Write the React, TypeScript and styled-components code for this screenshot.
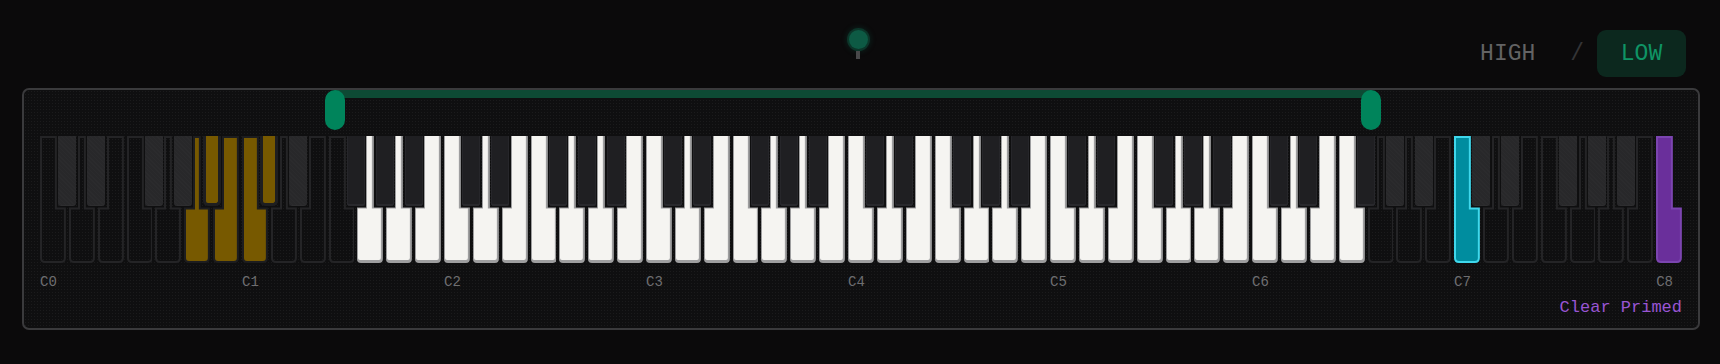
import React from 'react';
import styled, { createGlobalStyle, css } from 'styled-components';

const MONO = `"Liberation Mono", "DejaVu Sans Mono", monospace`;

const KB_WIDTH = 1642;
const GAP = 3;
const WHITE_COUNT = 57;
const KW = (KB_WIDTH - GAP * (WHITE_COUNT - 1)) / WHITE_COUNT;
const PITCH = KW + GAP;
const KH = 127;
const BW = 18;
const BH = 70;
const NOTCH = BW / 2 - GAP / 2 + 1.5; // cut into white key
const DEPTH = BH + 1.5;

type KeyState = 'off' | 'active' | 'hold' | 'cyan' | 'purple';

const stateOf = (s: number): KeyState => {
  if (s >= 9 && s <= 13) return 'hold';
  if (s === 84) return 'cyan';
  if (s === 96) return 'purple';
  if (s >= 18 && s <= 78) return 'active';
  return 'off';
};

const WHITE_OFFS = [0, 2, 4, 5, 7, 9, 11];
const NAMES = ['C', 'D', 'E', 'F', 'G', 'A', 'B'];
const BLACKS: { off: number; leftWhite: number }[] = [
  { off: 1, leftWhite: 0 },
  { off: 3, leftWhite: 1 },
  { off: 6, leftWhite: 3 },
  { off: 8, leftWhite: 4 },
  { off: 10, leftWhite: 5 },
];

type WhiteDef = { s: number; idx: number; nl: boolean; nr: boolean; state: KeyState };
type BlackDef = { s: number; left: number; state: KeyState };

const whites: WhiteDef[] = [];
const blacks: BlackDef[] = [];
for (let o = 0; o <= 8; o++) {
  for (let n = 0; n < 7; n++) {
    const idx = o * 7 + n;
    if (idx >= WHITE_COUNT) break;
    const name = NAMES[n];
    const s = o * 12 + WHITE_OFFS[n];
    whites.push({
      s,
      idx,
      nl: ['D', 'E', 'G', 'A', 'B'].includes(name),
      nr: ['C', 'D', 'F', 'G', 'A'].includes(name),
      state: stateOf(s),
    });
  }
  if (o < 8) {
    for (const b of BLACKS) {
      const lw = o * 7 + b.leftWhite;
      const s = o * 12 + b.off;
      blacks.push({ s, left: (lw + 1) * PITCH - GAP / 2 - BW / 2, state: stateOf(s) });
    }
  }
}

function keyPath(
  x0: number, y0: number, x1: number, y1: number,
  cutL: number | null, cutR: number | null, dy: number, r: number,
) {
  const L = cutL ?? x0;
  const R = cutR ?? x1;
  let p = `M${L},${y0} H${R}`;
  if (cutR !== null) p += ` V${dy} H${x1}`;
  p += ` V${y1 - r} Q${x1},${y1} ${x1 - r},${y1} H${x0 + r} Q${x0},${y1} ${x0},${y1 - r}`;
  if (cutL !== null) p += ` V${dy} H${L}`;
  p += ' Z';
  return p;
}

function strokedPath(w: WhiteDef, s: number, r: number) {
  const h = s / 2;
  return keyPath(
    h, h, KW - h, KH - h,
    w.nl ? NOTCH + h : null,
    w.nr ? KW - NOTCH - h : null,
    DEPTH + h, r,
  );
}

const STROKES: Record<Exclude<KeyState, 'active'>, { fill: string; stroke: string }> = {
  off: { fill: 'none', stroke: '#242426' },
  hold: { fill: '#775900', stroke: '#1d1d1f' },
  cyan: { fill: '#008d9f', stroke: '#3fd8ec' },
  purple: { fill: '#6a2f9b', stroke: '#7b45b0' },
};

const GlobalStyle = createGlobalStyle`
  html, body { margin: 0; padding: 0; background: #0b0a0b; }
  body { font-family: ${MONO}; width: 1720px; height: 364px; overflow: hidden; }
`;

const Page = styled.div`
  width: 1720px;
  height: 364px;
  display: flex;
  flex-direction: column;
  background: #0b0a0b;
`;

const Header = styled.header`
  height: 88px;
  box-sizing: border-box;
  padding-top: 30px;
  display: grid;
  grid-template-columns: 1fr auto 1fr;
  align-items: start;
`;

const Knob = styled.div`
  grid-column: 2;
  display: flex;
  flex-direction: column;
  align-items: center;
  gap: 2px;
  margin-left: -4px;
`;

const KnobDot = styled.div`
  width: 19px;
  height: 19px;
  border-radius: 50%;
  background: #0d5a44;
  box-shadow: 0 0 0 2px rgba(13, 60, 46, 0.8), 0 0 5px 3px rgba(12, 70, 54, 0.35);
`;

const KnobStem = styled.div`
  width: 4px;
  height: 8px;
  background: #48484a;
`;

const Toggle = styled.div`
  grid-column: 3;
  justify-self: end;
  margin-right: 34px;
  display: flex;
  align-items: center;
`;

const ToggleButton = styled.button<{ $active?: boolean }>`
  width: 89px;
  height: 47px;
  border: none;
  border-radius: 9px;
  font-family: ${MONO};
  font-size: 23px;
  padding: 0;
  cursor: pointer;
  background: transparent;
  color: #636364;
  ${(p) =>
    p.$active &&
    css`
      background: #0c281e;
      color: #0f9465;
    `}
`;

const Slash = styled.span`
  font-size: 23px;
  color: #343436;
  margin: 0 13px 0 18px;
`;

const Panel = styled.section`
  margin: 0 20px 0 22px;
  height: 242px;
  box-sizing: border-box;
  border: 2px solid #3a3a3c;
  border-radius: 7px;
  padding: 0 16px;
  background-color: #0f0f10;
  background-image: radial-gradient(rgba(255, 255, 255, 0.05) 0.8px, transparent 1px);
  background-size: 3px 3px;
  display: flex;
  flex-direction: column;
`;

const RangeTrack = styled.div`
  position: relative;
  height: 46px;
  flex: none;
`;

const RangeFill = styled.div`
  position: absolute;
  top: 0;
  height: 8px;
  background: #0d4a34;
`;

const Handle = styled.div`
  position: absolute;
  top: 0;
  width: 20px;
  height: 40px;
  border-radius: 10px;
  background: #00845b;
  transform: translateX(-50%);
`;

const Keyboard = styled.div`
  position: relative;
  height: ${KH}px;
  display: flex;
  gap: ${GAP}px;
  flex: none;
`;

const WhiteKey = styled.div`
  width: ${KW}px;
  height: ${KH}px;
  flex: none;
  svg { display: block; }
`;

const blackStyles: Record<KeyState, ReturnType<typeof css>> = {
  active: css`
    background: #1f1f22;
    box-shadow: inset 0 -2px 0 #29292d, inset 1px 0 0 #26262a, inset -1px 0 0 #26262a;
  `,
  off: css`
    background-color: #28282a;
    background-image: repeating-linear-gradient(45deg, rgba(255, 255, 255, 0.015) 0 1px, transparent 1px 3px);
    box-shadow: inset 0 -1px 0 #2e2e30;
  `,
  hold: css`
    background: #775900;
    border: 3px solid #1e1e20;
    border-top: none;
    border-radius: 0 0 5px 5px;
  `,
  cyan: css`background: #008d9f;`,
  purple: css`background: #6a2f9b;`,
};

const BlackKey = styled.div<{ $state: KeyState }>`
  position: absolute;
  top: 0;
  width: ${BW}px;
  height: ${BH}px;
  box-sizing: border-box;
  border-radius: 0 0 3px 3px;
  ${(p) => blackStyles[p.$state]}
`;

const Labels = styled.div`
  display: grid;
  grid-template-columns: repeat(8, ${7 * PITCH}px) 1fr;
  margin-top: 11px;
  line-height: 17px;
  font-size: 14px;
  color: #6e6e70;
  flex: none;
`;

const OctaveLabel = styled.span``;

const ClearRow = styled.div`
  margin-top: 7px;
  display: flex;
  justify-content: flex-end;
`;

const ClearButton = styled.button`
  background: none;
  border: none;
  padding: 0;
  font-family: ${MONO};
  font-size: 17px;
  line-height: 20px;
  color: #9955d3;
  cursor: pointer;
`;

const WhiteKeyShape: React.FC<{ def: WhiteDef }> = ({ def }) => {
  if (def.state === 'active') {
    const shadow = keyPath(0, 0, KW, KH, def.nl ? NOTCH : null, def.nr ? KW - NOTCH : null, DEPTH, 4);
    const face = keyPath(
      1, 0, KW - 2, KH - 3,
      def.nl ? NOTCH + 1 : null,
      def.nr ? KW - NOTCH - 2 : null,
      DEPTH + 1, 2,
    );
    return (
      <svg width={KW} height={KH} viewBox={`0 0 ${KW} ${KH}`}>
        <path d={shadow} fill="#9e9e9f" />
        <path d={face} fill="#f5f4f1" />
      </svg>
    );
  }
  const st = STROKES[def.state];
  return (
    <svg width={KW} height={KH} viewBox={`0 0 ${KW} ${KH}`}>
      <path d={strokedPath(def, 2, 4)} fill={st.fill} stroke={st.stroke} strokeWidth={2} />
    </svg>
  );
};

export default function App() {
  const lo = 17.98;
  const hi = 81.06;
  return (
    <Page>
      <GlobalStyle />
      <Header>
        <Knob>
          <KnobDot />
          <KnobStem />
        </Knob>
        <Toggle>
          <ToggleButton>HIGH</ToggleButton>
          <Slash>/</Slash>
          <ToggleButton $active>LOW</ToggleButton>
        </Toggle>
      </Header>
      <Panel>
        <RangeTrack>
          <RangeFill style={{ left: `${lo}%`, right: `${100 - hi}%` }} />
          <Handle style={{ left: `${lo}%` }} />
          <Handle style={{ left: `${hi}%` }} />
        </RangeTrack>
        <Keyboard>
          {whites.map((w) => (
            <WhiteKey key={w.s}>
              <WhiteKeyShape def={w} />
            </WhiteKey>
          ))}
          {blacks.map((b) => (
            <BlackKey key={b.s} $state={b.state} style={{ left: b.left }} />
          ))}
        </Keyboard>
        <Labels>
          {Array.from({ length: 9 }, (_, i) => (
            <OctaveLabel key={i}>C{i}</OctaveLabel>
          ))}
        </Labels>
        <ClearRow>
          <ClearButton>Clear Primed</ClearButton>
        </ClearRow>
      </Panel>
    </Page>
  );
}
